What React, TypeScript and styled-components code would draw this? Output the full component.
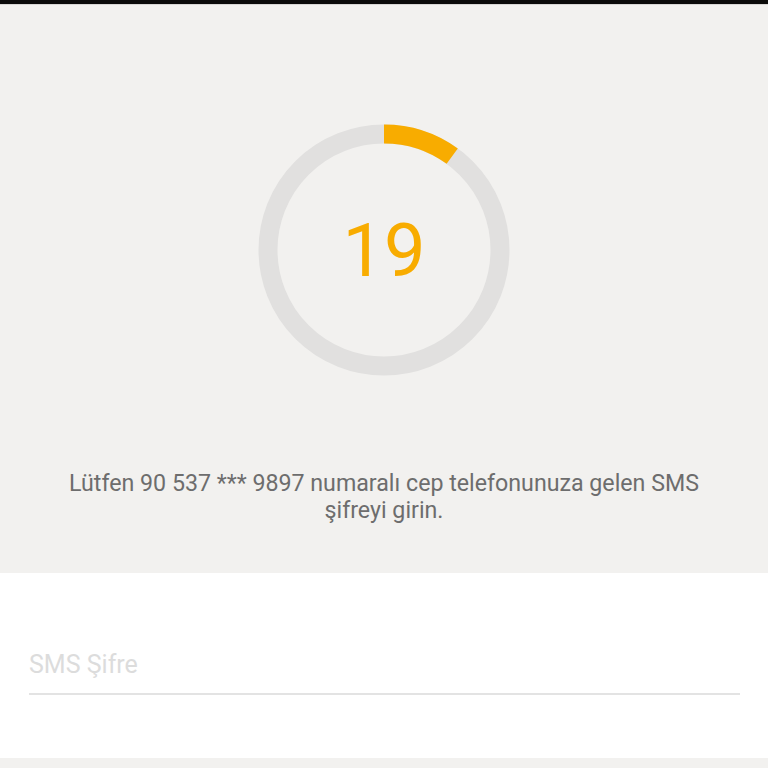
import styled, { createGlobalStyle } from "styled-components"

const GlobalStyle = createGlobalStyle`
  * {
    box-sizing: border-box;
  }
  body {
    margin: 0;
    background: #f2f1ef;
    font-family: Roboto, "Noto Sans", sans-serif;
  }
`

const RADIUS = 116
const STROKE = 19
const SIZE = 252
const CIRC = 2 * Math.PI * RADIUS

const Countdown: React.FC<{ seconds: number; progress: number }> = ({ seconds, progress }) => {
  const c = SIZE / 2
  return (
    <Ring>
      <svg width={SIZE} height={SIZE} viewBox={`0 0 ${SIZE} ${SIZE}`}>
        <circle cx={c} cy={c} r={RADIUS} fill="none" stroke="#e1e0df" strokeWidth={STROKE} />
        <circle
          cx={c}
          cy={c}
          r={RADIUS}
          fill="none"
          stroke="#f8ac00"
          strokeWidth={STROKE}
          strokeDasharray={`${CIRC * progress} ${CIRC}`}
          transform={`rotate(-90 ${c} ${c})`}
        />
      </svg>
      <Seconds>{seconds}</Seconds>
    </Ring>
  )
}

export default function App() {
  return (
    <>
      <GlobalStyle />
      <StatusStrip />
      <TimerPanel>
        <Countdown seconds={19} progress={0.1} />
        <Message>
          Lütfen 90 537 *** 9897 numaralı cep telefonunuza gelen SMS
          <br />
          şifreyi girin.
        </Message>
      </TimerPanel>
      <FormPanel>
        <CodeInput type="text" placeholder="SMS Şifre" />
      </FormPanel>
    </>
  )
}

const StatusStrip = styled.div`
  height: 5px;
  background: #0b0b0a;
  border-bottom: 1px solid #d8d7d5;
`

const TimerPanel = styled.section`
  display: flex;
  flex-direction: column;
  align-items: center;
  height: 568px;
  padding-top: 119px;
  background: #f2f1ef;
`

const Ring = styled.div`
  position: relative;
  width: 252px;
  height: 252px;

  svg {
    display: block;
  }
`

const Seconds = styled.span`
  position: absolute;
  inset: 0;
  display: flex;
  align-items: center;
  justify-content: center;
  font-size: 74px;
  font-weight: 400;
  color: #f8ac00;
`

const Message = styled.p`
  margin: 94px 0 0;
  font-size: 23.2px;
  line-height: 27px;
  color: #6d6d6d;
  text-align: center;
  white-space: nowrap;
`

const FormPanel = styled.section`
  height: 185px;
  padding: 73px 28px 0 29px;
  background: #fff;
`

const CodeInput = styled.input`
  display: block;
  width: 100%;
  height: 49px;
  padding: 0 0 10px;
  border: none;
  border-bottom: 2px solid #e3e3e3;
  outline: none;
  background: transparent;
  font-family: Roboto, "Noto Sans", sans-serif;
  font-size: 25px;
  color: #333;

  &::placeholder {
    color: #dcdcdc;
  }
`
